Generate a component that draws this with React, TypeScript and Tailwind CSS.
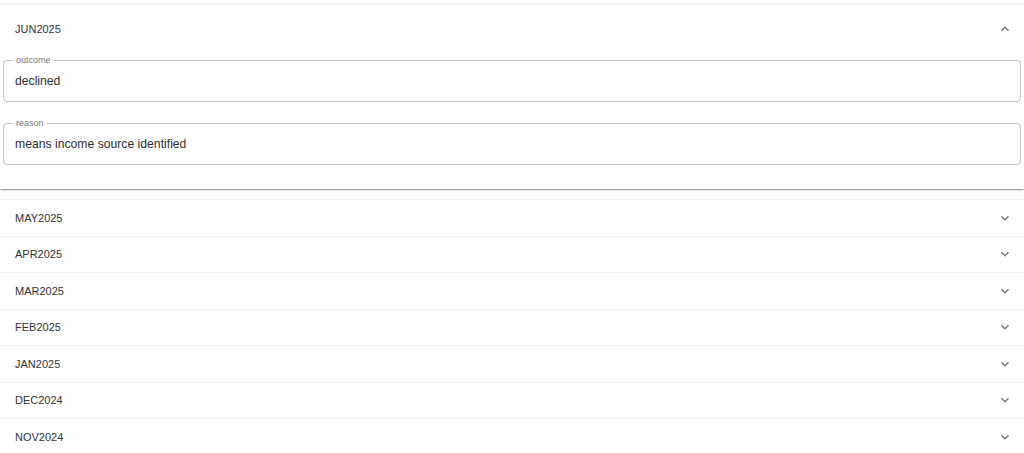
import { ReactNode } from "react"

const months = ["MAY2025", "APR2025", "MAR2025", "FEB2025", "JAN2025", "DEC2024", "NOV2024"]

function Chevron({ up = false }: { up?: boolean }) {
  return (
    <svg
      viewBox="0 0 24 24"
      className={up ? "h-4 w-4 rotate-180 fill-[#757575]" : "h-4 w-4 fill-[#757575]"}
    >
      <path d="M16.59 8.59 12 13.17 7.41 8.59 6 10l6 6 6-6z" />
    </svg>
  )
}

function Field({ label, children }: { label: string; children: ReactNode }) {
  return (
    <div className="relative flex h-[42px] items-center rounded-[4px] border border-[#c4c4c4] px-[11px]">
      <span className="absolute left-[9px] top-[-6px] bg-white px-[3px] text-[9px] leading-[10px] text-[#7a7a7a]">
        {label}
      </span>
      <span className="text-[12.2px] text-[#2f2f2f]">{children}</span>
    </div>
  )
}

export default function App() {
  return (
    <div
      className="min-h-[453px] bg-white pt-[4px]"
      style={{ fontFamily: '"Liberation Sans", Arial, sans-serif' }}
    >
      <div className="border-t border-[#eef2f2] bg-white shadow-[0_2px_1px_-1px_rgba(0,0,0,0.2),0_1px_1px_0_rgba(0,0,0,0.14),0_1px_3px_0_rgba(0,0,0,0.12)]">
        <div className="flex h-[48px] items-center justify-between pl-[15px] pr-[11px]">
          <span className="text-[11px] text-[#333]">JUN2025</span>
          <Chevron up />
        </div>
        <div className="flex flex-col gap-[21px] px-[3px] pb-[24px] pt-[7px]">
          <Field label="outcome">declined</Field>
          <Field label="reason">means income source identified</Field>
        </div>
      </div>

      <div className="mt-[10px]">
        {months.map((m) => (
          <div
            key={m}
            className="box-border flex h-[36.5px] items-center justify-between border-t border-[#eef2f2] pl-[15px] pr-[11px]"
          >
            <span className="text-[11px] text-[#333]">{m}</span>
            <Chevron />
          </div>
        ))}
      </div>
    </div>
  )
}
